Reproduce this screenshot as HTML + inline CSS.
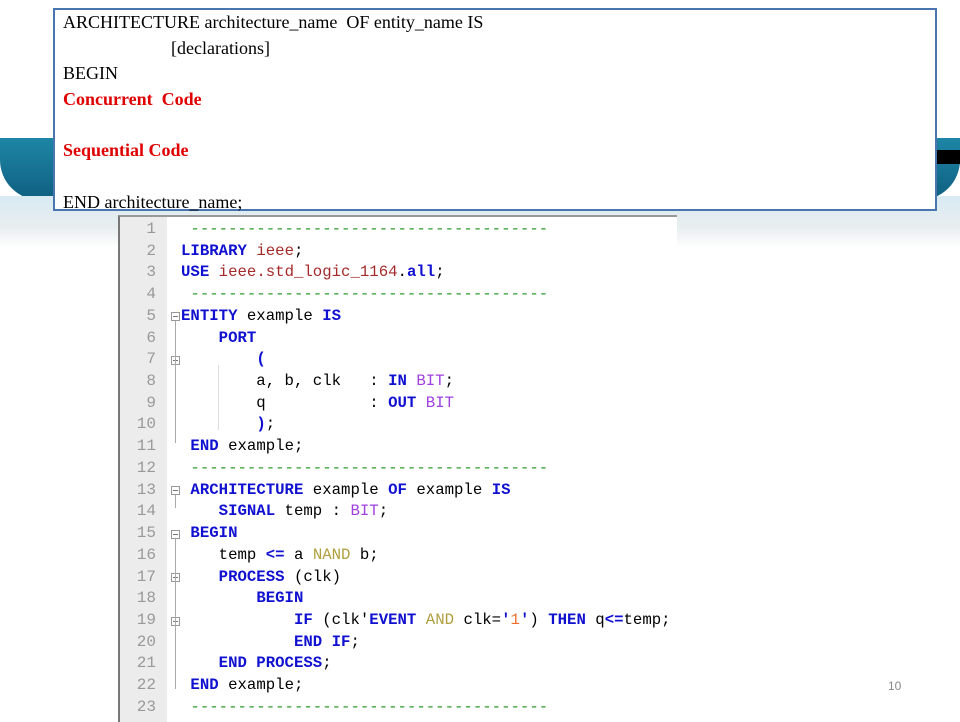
<!DOCTYPE html>
<html><head><meta charset="utf-8"><style>
body{margin:0;width:960px;height:720px;position:relative;overflow:hidden;background:#fff;font-family:"Liberation Sans",sans-serif}
.band{position:absolute;left:0;top:138px;width:960px;height:62px;background:linear-gradient(#1e86a6,#0f5f80);border-radius:0 0 40px 40px}
.band2{position:absolute;left:0;top:196px;width:960px;height:52px;background:linear-gradient(#d8eaf2,#e8eef0 60%,#fff)}
.blk{position:absolute;left:935px;top:150px;width:25px;height:14px;background:#000}
.box{position:absolute;left:53px;top:8px;width:872px;height:199px;border:2px solid #4a76b0;background:#fff;font-family:"Liberation Serif",serif;font-size:18px;line-height:25.7px;padding:0 0 0 8px}
.box div{height:25.7px;white-space:pre}
.red{color:#e00000;font-weight:bold}
.code{position:absolute;left:118px;top:215px;width:557px;height:505px;background:#fff;border-left:2px solid #777;border-top:2px solid #999}
.gut{position:absolute;left:0;top:0;width:47px;height:505px;background:#ececec}
.num{position:absolute;left:0;top:2px;width:36px;text-align:right;font-family:"Liberation Mono",monospace;font-size:16px;line-height:21.72px;color:#999;white-space:pre}
pre{position:absolute;left:61px;top:2px;margin:0;font-family:"Liberation Mono",monospace;font-size:15.7px;line-height:21.72px;color:#000}
.k{color:#1010d0;font-weight:bold}.l{color:#a52a2a}.t{color:#a040e0}.o{color:#b0a040}.g{color:#2a9a2a}.n{color:#f07030}
.fb{position:absolute;left:51px;width:7px;height:7px;border:1px solid #999;background:#fff}
.fb:after{content:"";position:absolute;left:1px;top:3px;width:5px;height:1px;background:#777}
.vl{position:absolute;width:1px;background:#aaa}
.pg{position:absolute;left:888px;top:679px;font-size:12px;color:#888}
</style></head><body>
<div class="band"></div><div class="band2"></div><div class="blk"></div>
<div class="box">
<div>ARCHITECTURE architecture_name  OF entity_name IS</div>
<div>                        [declarations]</div>
<div>BEGIN</div>
<div class="red">Concurrent  Code</div>
<div></div>
<div class="red">Sequential Code</div>
<div></div>
<div>END architecture_name;</div>
</div>
<div class="code">
<div class="gut"></div>
<div class="num">1
2
3
4
5
6
7
8
9
10
11
12
13
14
15
16
17
18
19
20
21
22
23</div>
<div class="fb" style="top:95px"></div>
<div class="fb" style="top:139px"></div>
<div class="fb" style="top:269px"></div>
<div class="fb" style="top:313px"></div>
<div class="fb" style="top:356px"></div>
<div class="fb" style="top:400px"></div>
<div class="vl" style="left:55px;top:104px;height:122px"></div>
<div class="vl" style="left:55px;top:278px;height:13px"></div>
<div class="vl" style="left:55px;top:322px;height:150px"></div>
<div class="vl" style="left:98px;top:148px;height:65px;background:#ddd"></div>
<pre><span class="g"> --------------------------------------</span>
<span class="k">LIBRARY</span> <span class="l">ieee</span>;
<span class="k">USE</span> <span class="l">ieee.std_logic_1164</span>.<span class="k">all</span>;
<span class="g"> --------------------------------------</span>
<span class="k">ENTITY</span> example <span class="k">IS</span>
    <span class="k">PORT</span>
        <span class="k">(</span>
        a, b, clk   : <span class="k">IN</span> <span class="t">BIT</span>;
        q           : <span class="k">OUT</span> <span class="t">BIT</span>
        <span class="k">)</span>;
 <span class="k">END</span> example;
<span class="g"> --------------------------------------</span>
 <span class="k">ARCHITECTURE</span> example <span class="k">OF</span> example <span class="k">IS</span>
    <span class="k">SIGNAL</span> temp : <span class="t">BIT</span>;
 <span class="k">BEGIN</span>
    temp <span class="k">&lt;=</span> a <span class="o">NAND</span> b;
    <span class="k">PROCESS</span> (clk)
        <span class="k">BEGIN</span>
            <span class="k">IF</span> (clk'<span class="k">EVENT</span> <span class="o">AND</span> clk=<span class="k">'</span><span class="n">1</span><span class="k">'</span>) <span class="k">THEN</span> q<span class="k">&lt;=</span>temp;
            <span class="k">END IF</span>;
    <span class="k">END PROCESS</span>;
 <span class="k">END</span> example;
<span class="g"> --------------------------------------</span></pre>
</div>
<div class="pg">10</div>
</body></html>
